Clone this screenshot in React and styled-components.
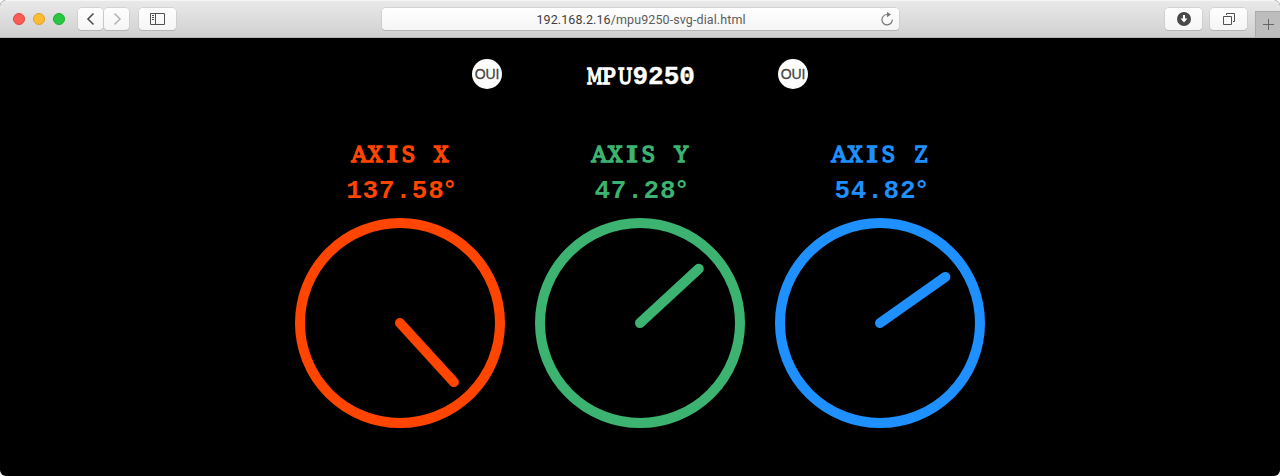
import React from 'react';
import styled, { createGlobalStyle } from 'styled-components';

const GlobalStyle = createGlobalStyle`
  * { box-sizing: border-box; }
  body { margin: 0; background: #fff; }
`;

const Window = styled.div`
  width: 100%;
  height: 476px;
  display: flex;
  flex-direction: column;
  overflow: hidden;
  border-radius: 6px;
  background: #000;
`;

const Toolbar = styled.header`
  height: 38px;
  flex: none;
  display: grid;
  grid-template-columns: 382px 517px 1fr;
  align-items: center;
  background: linear-gradient(#e9e9e9, #d0d0d0);
  border-top: 1px solid #f6f6f6;
  border-bottom: 1px solid #b4b4b4;
`;

const Controls = styled.div`
  display: flex;
  align-items: center;
  padding-left: 13px;
`;

const Lights = styled.div`
  display: flex;
  gap: 8px;
  margin-right: 13px;
`;

const Light = styled.span`
  width: 12px;
  height: 12px;
  border-radius: 50%;
  background: ${(p) => p.$fill};
  border: 1px solid ${(p) => p.$edge};
`;

const ToolButton = styled.button`
  width: ${(p) => p.$width}px;
  height: 22px;
  padding: 0;
  display: flex;
  align-items: center;
  justify-content: center;
  border: 0;
  border-radius: 4px;
  background: linear-gradient(#fefefe, #f5f5f5);
  box-shadow: 0 0 0 0.5px #c2c2c2, 0 1px 0.5px #aaa;
`;

const NavPair = styled.div`
  display: flex;
  gap: 1px;
  margin-right: 10px;
`;

const AddressBar = styled.div`
  height: 22px;
  display: grid;
  grid-template-columns: 24px 1fr 24px;
  align-items: center;
  justify-items: center;
  border-radius: 4px;
  background: linear-gradient(#fff, #f5f5f5);
  box-shadow: 0 0 0 0.5px #c2c2c2, 0 1px 0.5px #aaa;
`;

const Url = styled.span`
  grid-column: 2;
  margin: 1px 0 0 1px;
  font: 12.5px/20px Roboto, sans-serif;
  letter-spacing: 0.1px;
  color: #5c5c5c;
  white-space: nowrap;
`;

const Host = styled.span`
  color: #404040;
`;

const Actions = styled.div`
  display: flex;
  align-items: center;
  justify-content: flex-end;
  gap: 8px;
  height: 100%;
`;

const NewTab = styled.button`
  align-self: flex-end;
  width: 25px;
  height: 26px;
  padding: 0;
  display: flex;
  align-items: center;
  justify-content: center;
  border: 0;
  border-left: 1px solid #aaa;
  border-top: 1px solid #aaa;
  background: #bdbdbd;
`;

const Page = styled.main`
  flex: 1;
  display: flex;
  flex-direction: column;
  align-items: center;
  font-family: "Liberation Mono", monospace;
  font-weight: 700;
`;

const TitleRow = styled.div`
  width: 336px;
  height: 30px;
  margin-top: 21px;
  display: flex;
  align-items: center;
  justify-content: space-between;
`;

const Title = styled.h1`
  margin: 6px 0 0;
  color: #fff;
  font-size: 26px;
  line-height: 30px;
  -webkit-text-stroke: 0.4px #fff;
`;

const Toggle = styled.button`
  width: 30px;
  height: 30px;
  padding: 0;
  border: 0;
  border-radius: 50%;
  background: #fff;
  color: #444;
  font: 14px/30px "Liberation Sans", sans-serif;
  letter-spacing: -0.2px;
  text-align: center;
  -webkit-text-stroke: 0.3px #444;
`;

const Dials = styled.div`
  display: flex;
  margin-top: 49px;
`;

const DialPanel = styled.section`
  width: 240px;
  display: flex;
  flex-direction: column;
  align-items: center;
  color: ${(p) => p.$color};
`;

const AxisLabel = styled.span`
  height: 34px;
  font-size: 26px;
  line-height: 34px;
  white-space: pre;
`;

const Reading = styled.span`
  height: 34px;
  padding-left: 2px;
  font-size: 26px;
  line-height: 34px;
  letter-spacing: 0.8px;
`;

const Degree = styled.span`
  font-family: "Liberation Sans", sans-serif;
`;

/* One typewriter-width cell holding a slab-serif capital. */
const SlabCell = styled.span`
  display: inline-block;
  width: ${(p) => p.$pitch}px;
  text-align: center;
  font-family: "DejaVu Serif Condensed", "DejaVu Serif", serif;
  font-stretch: condensed;
  font-size: 22px;
  font-weight: 400;
  line-height: 30px;
  -webkit-text-stroke: ${(p) => p.$weight}px currentColor;
  transform: scaleX(${(p) => p.$stretch});
`;

const DialFace = styled.svg`
  display: block;
  margin-top: 12px;
`;

const STRETCH = { A: 1.07, X: 1.02, I: 1.5, S: 1, Y: 1.03, Z: 0.92, M: 0.78, P: 1.02, U: 0.86, ' ': 1 };

function Slab({ text, pitch, weight }) {
  return [...text].map((letter, i) => (
    <SlabCell key={i} $pitch={pitch} $weight={weight} $stretch={STRETCH[letter]}>{letter}</SlabCell>
  ));
}

const AXES = [
  { name: 'X', angle: 137.58, color: '#ff4500' },
  { name: 'Y', angle: 47.28, color: '#3cb371' },
  { name: 'Z', angle: 54.82, color: '#1e90ff' },
];

function Dial({ name, angle, color }) {
  return (
    <DialPanel $color={color}>
      <AxisLabel><Slab text={`AXIS ${name}`} pitch={16.4} weight={1.4} /></AxisLabel>
      <Reading>{angle.toFixed(2)}<Degree>°</Degree></Reading>
      <DialFace width="210" height="210" viewBox="-105 -105 210 210" fill="none" stroke="currentColor" strokeWidth="10">
        <circle r="100" />
        <line y2="-80" strokeLinecap="round" transform={`rotate(${angle})`} />
      </DialFace>
    </DialPanel>
  );
}

export default function App() {
  return (
    <>
      <GlobalStyle />
      <Window>
        <Toolbar>
          <Controls>
            <Lights>
              <Light $fill="#fc5b57" $edge="#e2463f" />
              <Light $fill="#fdbc2e" $edge="#e0a028" />
              <Light $fill="#27c840" $edge="#1dad2b" />
            </Lights>
            <NavPair>
              <ToolButton $width={25} aria-label="Back">
                <svg width="14" height="14" viewBox="0 0 14 14" fill="none" stroke="#505050" strokeWidth="1.6">
                  <path d="M9.500 1.500 4 7l5.500 5.500" />
                </svg>
              </ToolButton>
              <ToolButton $width={25} aria-label="Forward">
                <svg width="14" height="14" viewBox="0 0 14 14" fill="none" stroke="#b5b5b5" strokeWidth="1.6">
                  <path d="M4.500 1.500 10 7l-5.500 5.500" />
                </svg>
              </ToolButton>
            </NavPair>
            <ToolButton $width={37} aria-label="Sidebar">
              <svg width="15" height="12" viewBox="0 0 15 12" fill="none" stroke="#505050">
                <path d="M.5.5h14v11H.5zM5.500.5v11M2 2.500h2M2 4.500h2M2 6.500h2" />
              </svg>
            </ToolButton>
          </Controls>
          <AddressBar>
            <Url><Host>192.168.2.16</Host>/mpu9250-svg-dial.html</Url>
            <svg width="14" height="14" viewBox="0 0 14 14" fill="none" stroke="#777" strokeWidth="1.200">
              <path d="M12.300 7.500A5.200 5.200 0 1 1 7.100 2.500h1" />
              <path d="M7 0l4 2.600L7 5.200z" fill="#777" stroke="none" />
            </svg>
          </AddressBar>
          <Actions>
            <ToolButton $width={37} aria-label="Downloads">
              <svg width="14" height="14" viewBox="0 0 14 14">
                <circle cx="7" cy="7" r="7" fill="#484848" />
                <path d="M7 3v4" stroke="#fff" strokeWidth="2.200" />
                <path d="M3.500 6.500h7L7 10.500z" fill="#fff" />
              </svg>
            </ToolButton>
            <ToolButton $width={37} aria-label="Tabs">
              <svg width="12" height="12" viewBox="0 0 12 12" fill="none" stroke="#505050">
                <path d="M.5 3.500h8v8h-8zM3.500 2v-1.500h8v8h-1.500" />
              </svg>
            </ToolButton>
            <NewTab aria-label="New tab">
              <svg width="11" height="11" viewBox="0 0 11 11" stroke="#666">
                <path d="M5.500 0v11M0 5.500h11" />
              </svg>
            </NewTab>
          </Actions>
        </Toolbar>
        <Page>
          <TitleRow>
            <Toggle>OUI</Toggle>
            <Title><Slab text="MPU" pitch={15.8} weight={1.4} />9250</Title>
            <Toggle>OUI</Toggle>
          </TitleRow>
          <Dials>
            {AXES.map((axis) => <Dial key={axis.name} {...axis} />)}
          </Dials>
        </Page>
      </Window>
    </>
  );
}
